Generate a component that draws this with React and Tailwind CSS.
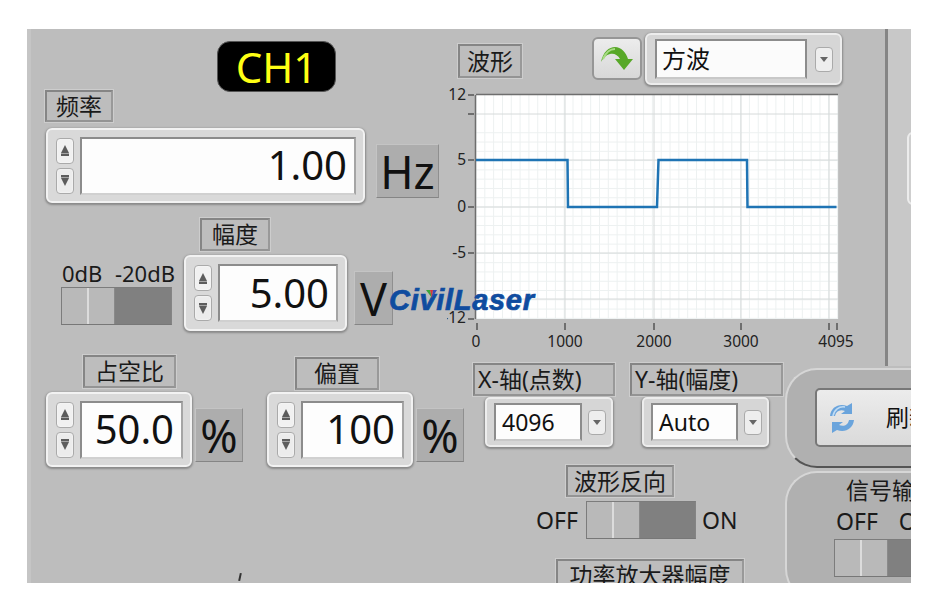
const FONT = "font-['Noto_Sans','Noto_Sans_CJK_SC',sans-serif]";

function Frame({ className = "", children }) {
  return (
    <div className={`flex items-center shrink-0 border-2 border-t-[#858585] border-l-[#858585] border-r-[#999] border-b-[#949494] outline outline-1 outline-[#cdcdcd] text-[#1a1a1a] leading-none ${className}`}>
      {children}
    </div>
  );
}

function Arrow({ down }) {
  return (
    <svg width="10" height="13" viewBox="0 0 10 13">
      <g fill="#5c5c5c" transform={down ? "rotate(180 5 6.5)" : undefined}>
        <path d="M5 1 L9 9 H1Z" />
        <rect x="1" y="9.5" width="8" height="2.5" />
      </g>
    </svg>
  );
}

function Spin() {
  return (
    <div className="flex flex-col justify-between w-[18px] h-[56px] shrink-0">
      <div className="h-[26px] flex items-center justify-center rounded-[4px] border border-[#aaa] bg-[#f1f1f1] shadow-[inset_0_0_2px_#fff]"><Arrow /></div>
      <div className="h-[26px] flex items-center justify-center rounded-[4px] border border-[#aaa] bg-[#ececec] shadow-[inset_0_0_2px_#fff]"><Arrow down /></div>
    </div>
  );
}

function Spinner({ value, className = "", h = "h-[75px]" }) {
  return (
    <div className={`${h} shrink-0 flex items-center gap-[6px] pl-[8px] pr-[7px] rounded-[6px] border-2 border-[#f2f2f2] bg-[#d9d9d9] shadow-[0_1px_2px_1px_#8a8a8a] ${className}`}>
      <Spin />
      <div className="flex-1 h-[58px] bg-[#fdfdfd] border-2 border-[#8c8c8c] border-b-[#d0d0d0] border-r-[#a5a5a5] flex items-center justify-end pr-[7px] text-[40px] leading-none text-[#111] pb-[1px]">
        {value}
      </div>
    </div>
  );
}

function Unit({ children, className = "" }) {
  return (
    <div className={`h-[54px] mt-[16px] shrink-0 flex items-center justify-center bg-[#adadad] border border-t-[#c4c4c4] border-l-[#c4c4c4] border-r-[#8f8f8f] border-b-[#858585] text-[#111] text-[45px] leading-none ${className}`}>
      {children}
    </div>
  );
}

function Toggle({ className = "" }) {
  return (
    <div className={`h-[38px] shrink-0 flex border border-t-[#7c7c7c] border-l-[#7c7c7c] border-r-[#848484] border-b-[#777] bg-[#b9b9b9] ${className}`}>
      <div className="w-[27px] border-r-2 border-[#dcdcdc]" />
      <div className="w-[26px] border-r border-[#8a8a8a]" />
      <div className="flex-1 bg-[#808080]" />
    </div>
  );
}

function Dropdown({ text, className = "", fieldW = "w-[88px]" }) {
  return (
    <div className={`h-[50px] shrink-0 flex items-center pl-[7px] rounded-[5px] border-2 border-[#ededed] bg-[#d6d6d6] shadow-[0_1px_2px_1px_#8a8a8a] ${className}`}>
      <div className={`${fieldW} h-[38px] bg-[#fdfdfd] border-2 border-[#8c8c8c] border-b-[#c8c8c8] flex items-center pl-[6px] text-[23px] leading-none text-[#111]`}>{text}</div>
      <div className="ml-[6px] w-[18px] h-[25px] rounded-[4px] border border-[#aaa] bg-[#eeeeee] flex items-center justify-center">
        <div className="w-0 h-0 border-x-[4px] border-x-transparent border-t-[5px] border-t-[#666]" />
      </div>
    </div>
  );
}

function Chart() {
  const px0 = 29, px1 = 391, py0 = 10, py1 = 234;
  const xs = [];
  for (let i = 0; i * 8.82 + px0 < px1; i++) xs.push(px0 + i * 8.82);
  const ys = [];
  for (let i = -8; i < 20; i++) ys.push(122 + i * 9.28);
  const majorX = [118, 207, 294, 382];
  const majorY = [75, 122, 168, 214, 29];
  const yLabels = [["12", 15], ["5", 80], ["0", 127], ["-5", 173], ["-12", 238]];
  const xLabels = [["0", 29], ["1000", 118], ["2000", 207], ["3000", 294], ["4095", 389]];
  return (
    <svg width="438" height="272" viewBox="0 0 438 272" className="block">
      <rect x={px0} y={py0} width={px1 - px0} height={py1 - py0} fill="#fff" />
      {xs.map((x, i) => <line key={i} x1={x} x2={x} y1={py0} y2={py1} stroke="#edf1f1" />)}
      {ys.filter((y) => y > py0 && y < py1).map((y, i) => <line key={i} y1={y} y2={y} x1={px0} x2={px1} stroke="#edf1f1" />)}
      {majorX.map((x) => <line key={x} x1={x} x2={x} y1={py0} y2={py1} stroke="#d6dada" />)}
      {majorY.map((y) => <line key={y} y1={y} y2={y} x1={px0} x2={px1} stroke="#d6dada" />)}
      <path d={`M${px0} ${py0 - 0.5} H${px1} M${px0 - 0.5} ${py0} V${py1}`} stroke="#6e6e6e" strokeWidth="1.5" fill="none" />
      <path d="M29 75 H120.5 L121 122 H210 L211.5 75 H300 L300.5 122 H389.5" stroke="#1f74b4" strokeWidth="2.5" fill="none" />
      {[10, 29, 75, 122, 168, 234].map((y) => (
        <line key={y} x1="21" x2="27" y1={y} y2={y} stroke="#555" strokeWidth="1.5" />
      ))}
      {[30, 118, 207, 294, 382, 390].map((x) => <line key={x} x1={x} x2={x} y1="238" y2="245" stroke="#555" strokeWidth="1.5" />)}
      {yLabels.map(([t, y]) => <text key={t} x="19" y={y} textAnchor="end" fontSize="15.5" fill="#222">{t}</text>)}
      {xLabels.map(([t, x]) => <text key={t} x={x} y="262" textAnchor="middle" fontSize="15.5" fill="#222">{t}</text>)}
    </svg>
  );
}

function GreenArrow() {
  return (
    <svg width="34" height="28" viewBox="0 0 34 26">
      <path d="M1 16 C3 6 9 1 15 1 C21 1 26 6 28 13 H33 L24 24 L15 13 H20 C18 9 14 7 10 8 C6 9 3 12 1 16Z" fill="#58a828" />
      <path d="M3 13 C6 6 10 3 15 3" stroke="#a8dc84" strokeWidth="2" fill="none" />
    </svg>
  );
}

function SyncIcon() {
  return (
    <svg width="30" height="34" viewBox="0 0 30 34">
      <path d="M3 15 C4 6 12 2 20 5 L25 2 V13 H14 L18 10 C13 8 9 10 8 15Z" fill="#6aa4dc" />
      <path d="M27 19 C26 28 18 32 10 29 L5 32 V21 H16 L12 24 C17 26 21 24 22 19Z" fill="#6aa4dc" />
      <path d="M6 15 C7 9 12 5 18 6" stroke="#c0dcf4" strokeWidth="1.5" fill="none" />
    </svg>
  );
}

export default function App() {
  return (
    <div className={`w-[926px] h-[600px] bg-white overflow-hidden pt-[29px] pl-[27px] ${FONT}`}>
      <div className="relative w-[884px] h-[554px] flex overflow-hidden bg-[#bdbdbd] shadow-[inset_4px_0_0_#c5c5c5]">
        {/* left column */}
        <div className="w-[420px] shrink-0 flex flex-col">
          <div className="mt-[12px] ml-[190px] w-[119px] h-[51px] rounded-[13px] bg-black border border-[#555] flex items-center justify-center text-[#ffff14] text-[42px] leading-none">CH1</div>
          <Frame className="-mt-[2px] ml-[18px] w-[68px] h-[32px] text-[23px] justify-center">频率</Frame>
          <div className="mt-[6px] ml-[19px] flex items-start">
            <Spinner value="1.00" className="w-[319px]" />
            <Unit className="w-[63px] ml-[11px]">Hz</Unit>
          </div>
          <Frame className="mt-[15px] ml-[173px] w-[70px] h-[33px] text-[23px] justify-center">幅度</Frame>
          <div className="mt-[4px] ml-[34px] flex items-start">
            <div className="w-[111px] shrink-0 flex flex-col">
              <div className="mt-[4px] h-[28px] w-[113px] ml-[1px] flex justify-between text-[22px] leading-[28px] text-[#1a1a1a] whitespace-nowrap"><span>0dB</span><span>-20dB</span></div>
              <Toggle className="w-[111px]" />
            </div>
            <Spinner value="5.00" className="w-[163px] ml-[12px]" h="h-[76px]" />
            <Unit className="w-[39px] ml-[7px]">V</Unit>
          </div>
          <div className="mt-[24px] flex items-start">
            <Frame className="ml-[56px] w-[93px] h-[33px] text-[23px] justify-center">占空比</Frame>
            <Frame className="ml-[119px] mt-[2px] w-[84px] h-[33px] text-[23px] justify-center">偏置</Frame>
          </div>
          <div className="mt-[2px] ml-[19px] flex items-start">
            <Spinner value="50.0" className="w-[146px]" />
            <Unit className="w-[48px] ml-[3px]">%</Unit>
            <Spinner value="100" className="w-[146px] ml-[24px]" />
            <Unit className="w-[48px] ml-[3px]">%</Unit>
          </div>
        </div>

        {/* right area */}
        <div className="w-[464px] shrink-0 flex flex-col">
          <div className="h-[337px] flex shrink-0">
            <div className="w-[438px] shrink-0 flex flex-col">
              <div className="h-[56px] flex items-start shrink-0">
                <Frame className="ml-[11px] mt-[15px] w-[64px] h-[34px] text-[23px] justify-center">波形</Frame>
                <div className="ml-[70px] mt-[8px] w-[50px] h-[43px] rounded-[6px] border-2 border-[#969696] bg-gradient-to-b from-[#ececec] to-[#d8d8d8] flex items-center justify-center shrink-0"><GreenArrow /></div>
                <div className="ml-[3px] mt-[4px] w-[197px] h-[52px] shrink-0 flex items-center pl-[8px] rounded-[6px] border-2 border-[#ededed] bg-[#d6d6d6] shadow-[0_1px_2px_1px_#8a8a8a]">
                  <div className="w-[152px] h-[40px] bg-[#fbfbfb] border-2 border-[#8c8c8c] border-b-[#c8c8c8] flex items-center pl-[5px] text-[24px] leading-none text-[#111]">方波</div>
                  <div className="ml-[8px] w-[18px] h-[25px] rounded-[4px] border border-[#aaa] bg-[#eeeeee] flex items-center justify-center">
                    <div className="w-0 h-0 border-x-[4px] border-x-transparent border-t-[5px] border-t-[#666]" />
                  </div>
                </div>
              </div>
              <Chart />
            </div>
            <div className="w-[3px] shrink-0 bg-[#858585]" />
            <div className="flex-1 bg-[#c8c8c8] pl-[19px] pt-[103px]">
              <div className="w-[20px] h-[73px] rounded-l-[6px] border-2 border-[#ececec] bg-[#cfcfcf]" />
            </div>
          </div>

          <div className="flex">
            <div className="w-[338px] shrink-0 flex flex-col">
              <div className="-mt-[3px] flex">
                <Frame className="ml-[26px] w-[142px] h-[33px] text-[23px] pl-[3px]">X-轴(点数)</Frame>
                <Frame className="ml-[15px] w-[153px] h-[33px] text-[23px] pl-[3px]">Y-轴(幅度)</Frame>
              </div>
              <div className="mt-[1px] flex">
                <Dropdown text="4096" className="ml-[38px] w-[128px]" fieldW="w-[88px]" />
                <Dropdown text="Auto" className="ml-[29px] w-[127px]" fieldW="w-[87px]" />
              </div>
              <Frame className="mt-[18px] ml-[119px] w-[108px] h-[32px] text-[23px] justify-center">波形反向</Frame>
              <div className="mt-[4px] flex items-center text-[23px] leading-none text-[#1a1a1a]">
                <span className="ml-[89px] w-[43px]">OFF</span>
                <Toggle className="ml-[7px] w-[110px]" />
                <span className="ml-[6px]">ON</span>
              </div>
              <Frame className="mt-[20px] ml-[109px] w-[188px] h-[33px] text-[23px] justify-center">功率放大器幅度</Frame>
            </div>

            <div className="shrink-0 flex flex-col pt-[2px] gap-[3px]">
              <div className="w-[170px] h-[100px] shrink-0 rounded-l-[32px] border-2 border-[#d6d6d6] border-b-[#555] border-r-0 bg-[#b0b0b0] pl-[28px] pt-[18px]">
                <div className="w-[150px] h-[59px] rounded-[5px] border-2 border-[#777] bg-gradient-to-b from-[#ececec] to-[#dadada] flex items-center pl-[10px]">
                  <SyncIcon />
                  <span className="ml-[29px] text-[23px] leading-none text-[#111] whitespace-nowrap">刷新</span>
                </div>
              </div>
              <div className="w-[170px] h-[130px] shrink-0 rounded-l-[32px] border-2 border-[#d6d6d6] border-r-0 bg-[#b0b0b0] pl-[47px] pt-[3px]">
                <div className="text-[23px] leading-[28px] text-[#1a1a1a] whitespace-nowrap pl-[12px]">信号输出</div>
                <div className="mt-[4px] pl-[2px] text-[23px] leading-[26px] text-[#1a1a1a] whitespace-nowrap">OFF<span className="ml-[21px]">ON</span></div>
                <Toggle className="mt-[5px] w-[116px]" />
              </div>
            </div>
          </div>
        </div>

        {/* watermark logo over the panel */}
        <div className="absolute left-[362px] top-[253px] font-['Liberation_Sans',sans-serif] font-bold italic text-[#0f4c9f] text-[29px] leading-[36px] tracking-[0.7px] [-webkit-text-stroke:0.7px_#0f4c9f] whitespace-nowrap">
          CivilLaser
        </div>
        <svg className="absolute left-[398px] top-[261px]" width="14" height="10" viewBox="0 0 14 10">
          <path d="M1 0 H5 L7 8Z" fill="#3aa53a" />
          <path d="M5 0 H8 L7 8Z" fill="#d23b3b" />
          <path d="M8 0 H12 L7 8Z" fill="#3b4fb5" />
        </svg>
        <div className="absolute left-[212px] top-[544px] w-[2px] h-[8px] bg-[#333] rotate-12" />
      </div>
    </div>
  );
}
